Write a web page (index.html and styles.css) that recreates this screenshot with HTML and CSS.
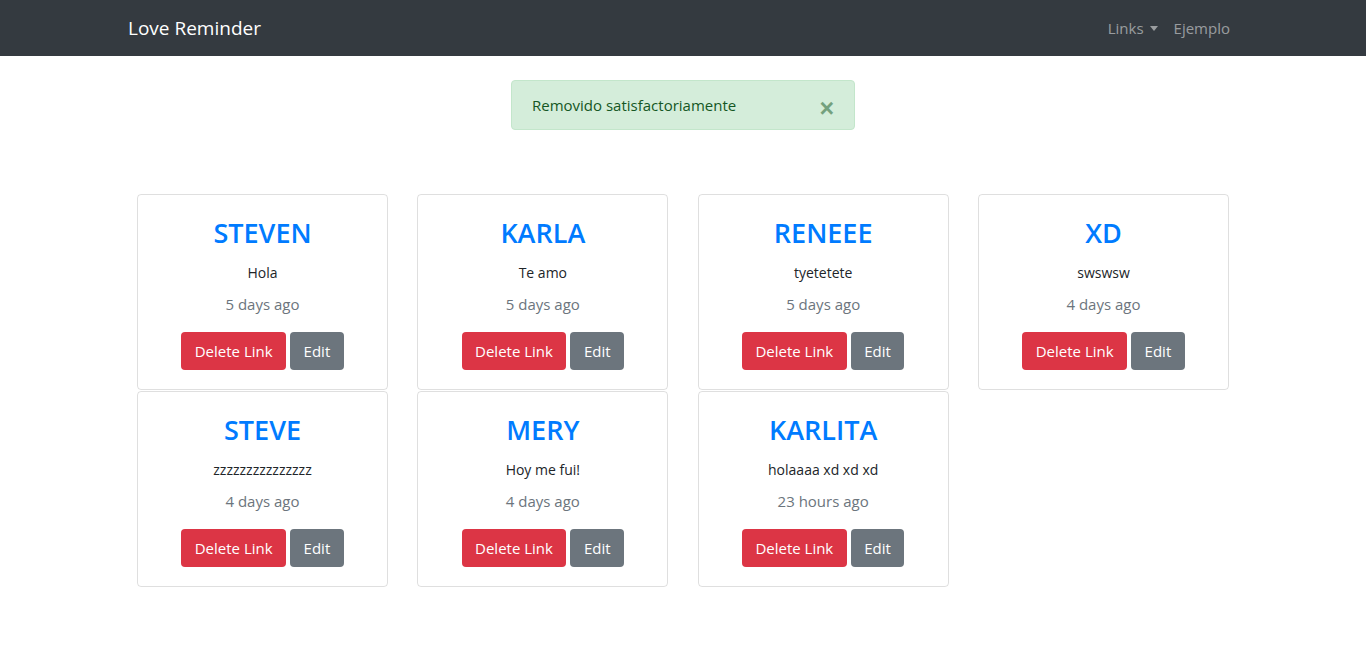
FILE: index.html
```html
<!DOCTYPE html>
<html lang="es">
<head>
<meta charset="utf-8">
<title>Love Reminder</title>
<link rel="stylesheet" href="styles.css">
</head>
<body>
<nav class="navbar">
  <div class="container nav-inner">
    <a class="brand" href="#">Love Reminder</a>
    <ul class="nav-links">
      <li><a href="#" class="nav-link dropdown">Links<span class="caret"></span></a></li>
      <li><a href="#" class="nav-link">Ejemplo</a></li>
    </ul>
  </div>
</nav>
<main class="main">
  <div class="alert">
    <span>Removido satisfactoriamente</span>
    <button class="close" type="button" aria-label="Close">&times;</button>
  </div>
  <div class="grid">
    <div class="card"><h3 class="card-title">STEVEN</h3><p class="desc">Hola</p><p class="time">5 days ago</p><div class="actions"><a class="btn btn-danger">Delete Link</a><a class="btn btn-secondary">Edit</a></div></div>
    <div class="card"><h3 class="card-title">KARLA</h3><p class="desc">Te amo</p><p class="time">5 days ago</p><div class="actions"><a class="btn btn-danger">Delete Link</a><a class="btn btn-secondary">Edit</a></div></div>
    <div class="card"><h3 class="card-title">RENEEE</h3><p class="desc">tyetetete</p><p class="time">5 days ago</p><div class="actions"><a class="btn btn-danger">Delete Link</a><a class="btn btn-secondary">Edit</a></div></div>
    <div class="card"><h3 class="card-title">XD</h3><p class="desc">swswsw</p><p class="time">4 days ago</p><div class="actions"><a class="btn btn-danger">Delete Link</a><a class="btn btn-secondary">Edit</a></div></div>
    <div class="card"><h3 class="card-title">STEVE</h3><p class="desc">zzzzzzzzzzzzzzz</p><p class="time">4 days ago</p><div class="actions"><a class="btn btn-danger">Delete Link</a><a class="btn btn-secondary">Edit</a></div></div>
    <div class="card"><h3 class="card-title">MERY</h3><p class="desc">Hoy me fui!</p><p class="time">4 days ago</p><div class="actions"><a class="btn btn-danger">Delete Link</a><a class="btn btn-secondary">Edit</a></div></div>
    <div class="card"><h3 class="card-title">KARLITA</h3><p class="desc">holaaaa xd xd xd</p><p class="time">23 hours ago</p><div class="actions"><a class="btn btn-danger">Delete Link</a><a class="btn btn-secondary">Edit</a></div></div>
  </div>
</main>
</body>
</html>
```
FILE: styles.css
```css
* { box-sizing: border-box; }
body {
  margin: 0;
  font-family: "Open Sans", "Noto Sans", sans-serif;
  font-size: 15px;
  line-height: 24px;
  color: #212529;
  background: #fff;
}
a { text-decoration: none; }
.container {
  max-width: 1140px;
  margin: 0 auto;
  padding: 0 15px;
}
.navbar {
  background: #343a40;
  height: 56px;
}
.nav-inner {
  height: 56px;
  display: flex;
  align-items: center;
  justify-content: space-between;
}
.brand {
  color: #fff;
  font-size: 19px;
  line-height: 30px;
}
.nav-links {
  list-style: none;
  margin: 0;
  padding: 0;
  display: flex;
}
.nav-link {
  display: flex;
  align-items: center;
  color: rgba(255,255,255,.5);
  padding: 8px 8px;
  font-size: 15px;
}
.dropdown { padding-left: 11px; }
.caret {
  display: inline-block;
  margin-left: 6px;
  border-top: 5px solid rgba(255,255,255,.5);
  border-left: 4.5px solid transparent;
  border-right: 4.5px solid transparent;
}
.main {
  padding-top: 24px;
}
.alert {
  width: 344px;
  height: 50px;
  margin: 0 auto;
  position: relative;
  background: #d4edda;
  border: 1px solid #c3e6cb;
  border-radius: 4px;
  color: #155724;
  padding: 12px 20px;
  display: flex;
  align-items: center;
}
.close {
  position: absolute;
  right: 20px;
  top: 12px;
  background: none;
  border: 0;
  padding: 0;
  font-family: "Liberation Sans", sans-serif;
  font-size: 25px;
  font-weight: 700;
  line-height: 30px;
  color: #155724;
  opacity: .5;
}
.grid {
  width: 1092px;
  margin: 64px auto 0;
  display: grid;
  grid-template-columns: repeat(4, 251px);
  column-gap: 29.33px;
  row-gap: 1px;
}
.card {
  border: 1px solid rgba(0,0,0,.125);
  border-radius: 4px;
  padding: 20px 20px 19px;
  text-align: center;
  height: 196px;
}
.card-title {
  margin: 0 0 11px;
  color: #007bff;
  font-size: 27px;
  font-weight: 600;
  line-height: 35px;
}
.desc {
  margin: 0 0 7px;
  font-size: 14px;
}
.time {
  margin: 0 0 16px;
  color: #6c757d;
}
.actions {
  display: flex;
  justify-content: center;
  gap: 4px;
}
.btn {
  display: inline-block;
  height: 38px;
  padding: 7px 13.5px 5px;
  border-radius: 4px;
  color: #fff;
  font-size: 15px;
  line-height: 24px;
}
.btn-danger { background: #dc3545; }
.btn-secondary { background: #6c757d; }
```
